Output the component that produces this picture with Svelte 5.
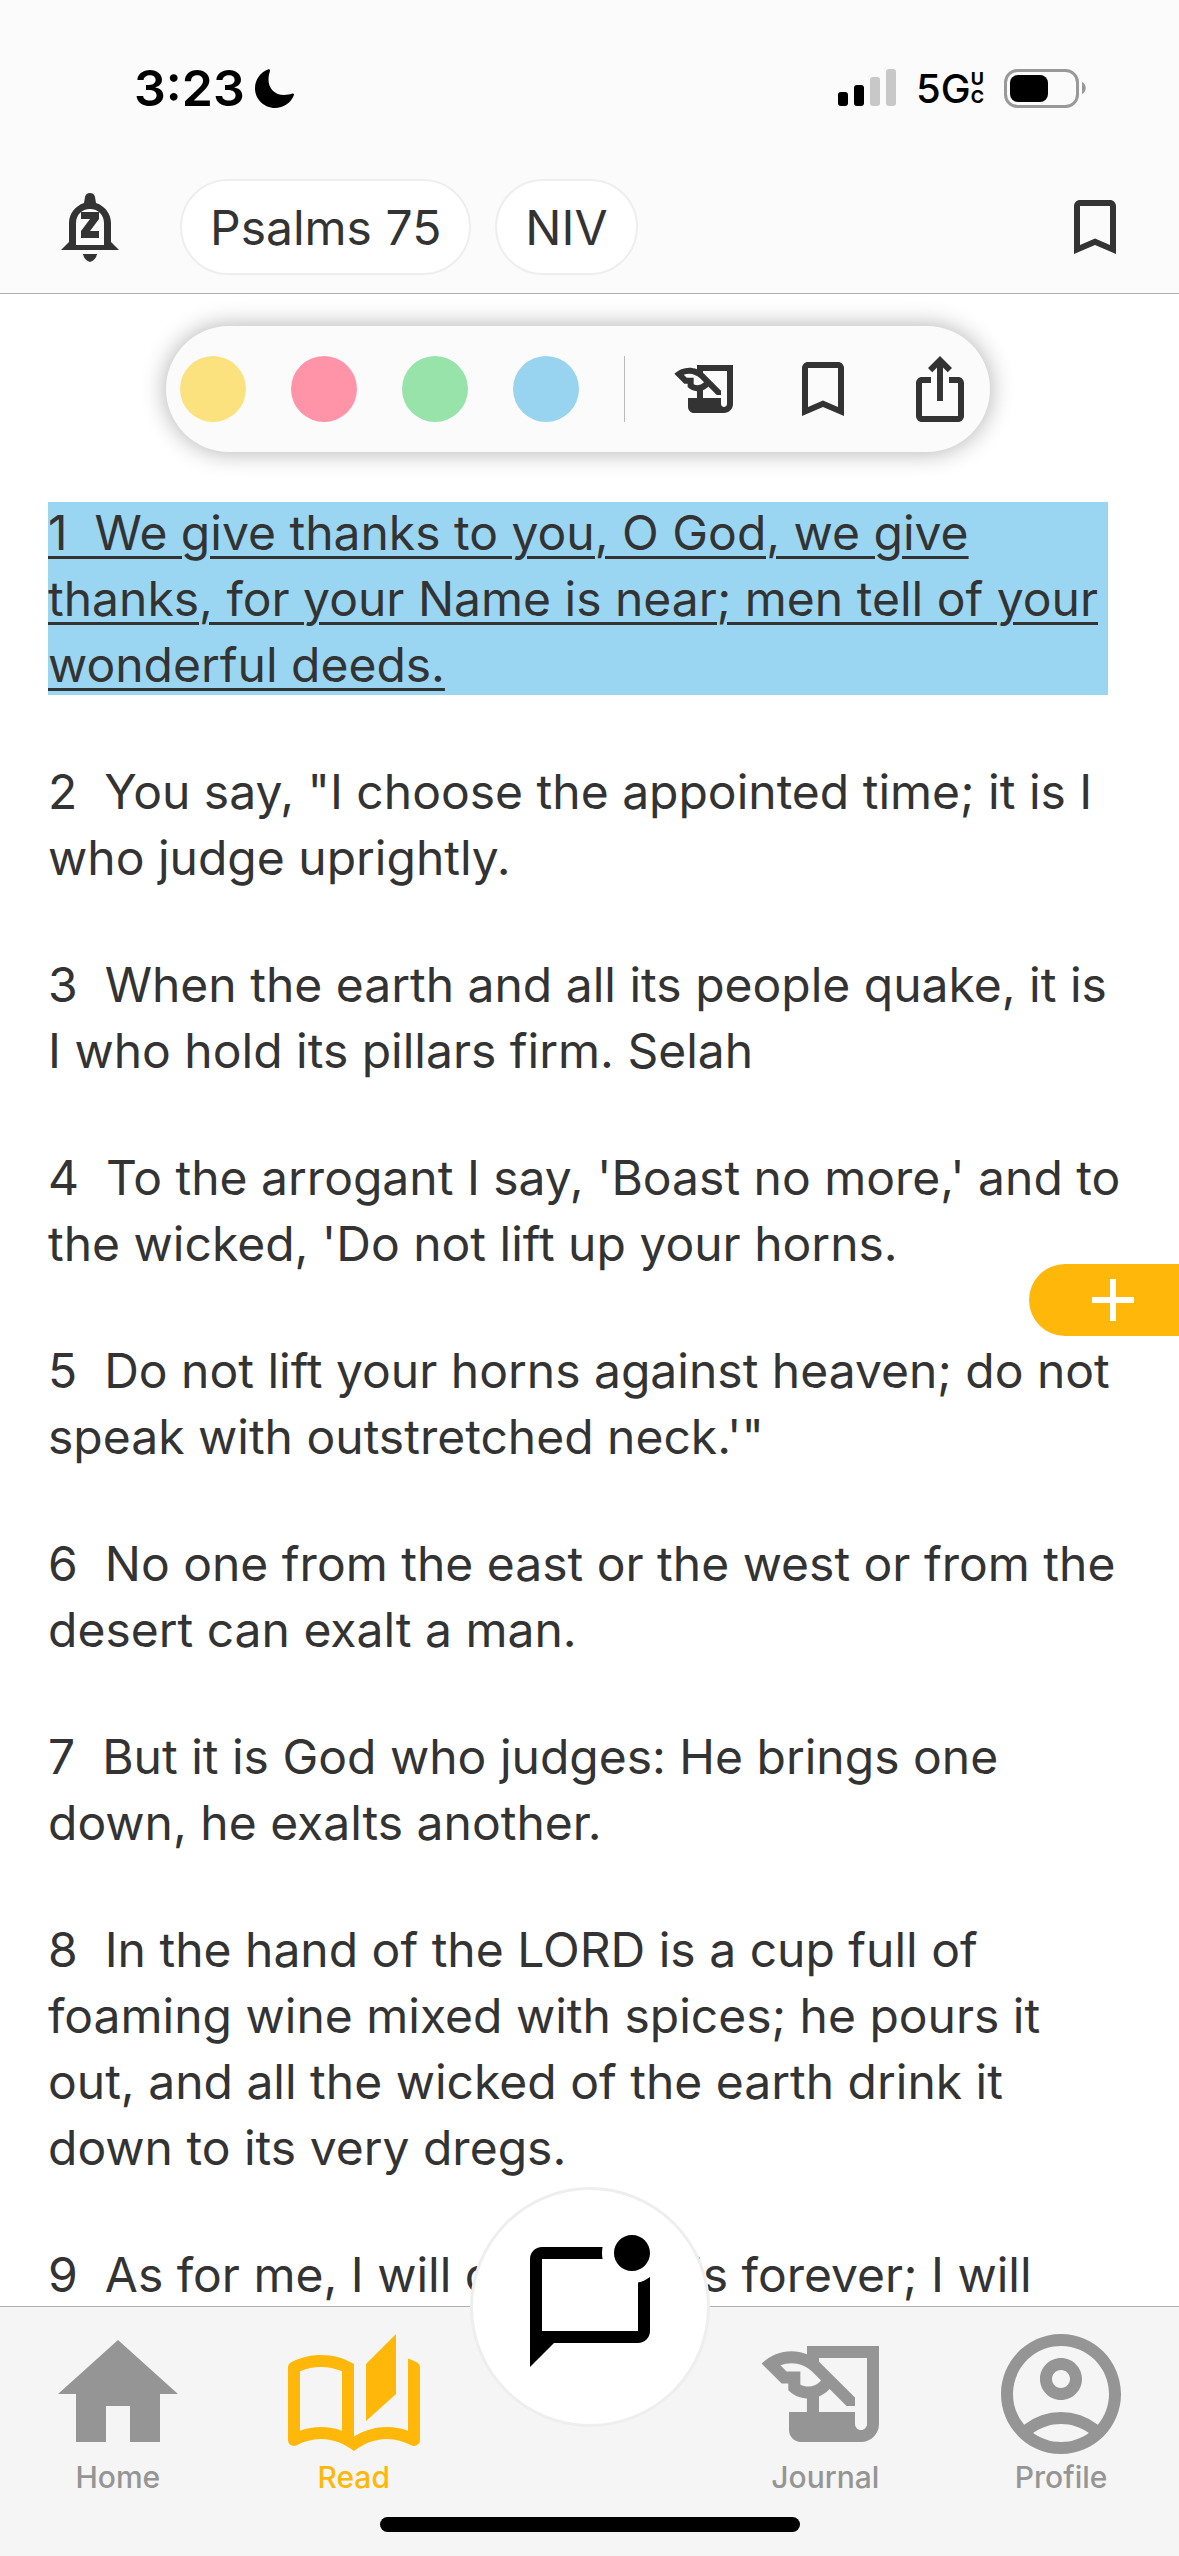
<script>
  const paths = {
    bookmark: 'M17 3H7c-1.1 0-2 .9-2 2v16l7-3 7 3V5c0-1.1-.9-2-2-2zm0 15-5-2.180L7 18V5h10v13z',
    journal: 'M9 4v1.380c-.83-.33-1.720-.5-2.610-.5-1.790 0-3.580.68-4.950 2.050l3.330 3.330h1.110v1.110c.86.86 1.980 1.310 3.110 1.360V15H6v3c0 1.100.9 2 2 2h10c1.660 0 3-1.340 3-3V4H9zm-1.110 6.410V8.260H5.610L4.570 7.220a5.070 5.070 0 0 1 1.820-.34c1.340 0 2.590.52 3.540 1.460l1.410 1.410-.2.2a2.700 2.700 0 0 1-1.920.8c-.47 0-.93-.12-1.330-.34zM19 17c0 .55-.45 1-1 1s-1-.45-1-1v-2h-6v-2.590c.57-.23 1.100-.57 1.560-1.030l.2-.2L15.590 14H17v-1.410l-6-5.970V6h8v11z',
    share: 'M16 5l-1.420 1.420-1.590-1.590V16h-1.980V4.830L9.420 6.420 8 5l4-4 4 4zm4 5v11c0 1.100-.9 2-2 2H6c-1.110 0-2-.9-2-2V10c0-1.110.89-2 2-2h3v2H6v11h12V10h-3V8h3c1.100 0 2 .89 2 2z',
    home: 'M10 20v-6h4v6h5v-8h3L12 3 2 12h3v8z',
    read: 'M22.470 5.200c-.47-.24-.96-.44-1.470-.61v12.030c-1.140-.41-2.310-.62-3.500-.62-1.900 0-3.780.54-5.500 1.580V5.480C10.380 4.550 8.510 4 6.500 4c-1.790 0-3.480.44-4.970 1.200-.33.16-.53.51-.53.88v12.080c0 .58.47.99 1 .99.16 0 .32-.04.48-.12C3.690 18.400 5.050 18 6.500 18c2.070 0 3.980.82 5.500 2 1.520-1.180 3.430-2 5.500-2 1.450 0 2.810.4 4.020 1.040.16.08.32.12.48.12.52 0 1-.41 1-.99V6.080c0-.37-.2-.72-.53-.88zM10 16.620C8.860 16.210 7.690 16 6.500 16c-1.190 0-2.360.21-3.500.62V6.710C4.110 6.240 5.280 6 6.500 6c1.200 0 2.390.25 3.500.72v9.900zM19 .5l-5 5V15l5-4.500V.5z',
    profile: 'M12 2C6.480 2 2 6.480 2 12s4.480 10 10 10 10-4.480 10-10S17.520 2 12 2zM7.350 18.500C8.660 17.560 10.260 17 12 17s3.340.56 4.650 1.500C15.340 19.440 13.740 20 12 20s-3.340-.56-4.650-1.500zm10.790-1.380a9.947 9.947 0 0 0-12.280 0A7.957 7.957 0 0 1 4 12c0-4.420 3.580-8 8-8s8 3.580 8 8c0 1.950-.7 3.730-1.860 5.120zM12 6c-1.930 0-3.500 1.570-3.500 3.500S10.070 13 12 13s3.500-1.570 3.500-3.500S13.930 6 12 6zm0 5c-.83 0-1.500-.67-1.500-1.500S11.170 8 12 8s1.500.67 1.500 1.500S12.830 11 12 11z',
    chat: 'M22 6.980V16c0 1.100-.9 2-2 2H6l-4 4V4c0-1.100.9-2 2-2h10.100c-.06.32-.1.66-.1 1s.04.68.1 1H4v12h16V7.900c.74-.15 1.420-.48 2-.92zM16 3c0 1.660 1.340 3 3 3s3-1.340 3-3-1.340-3-3-3-3 1.340-3 3z'
  };

  const colours = ['yellow', 'pink', 'green', 'blue'];

  const verses = [
    'We give thanks to you, O God, we give thanks, for your Name is near; men tell of your wonderful deeds.',
    'You say, "I choose the appointed time; it is I who judge uprightly.',
    'When the earth and all its people quake, it is I who hold its pillars firm. Selah',
    "To the arrogant I say, 'Boast no more,' and to the wicked, 'Do not lift up your horns.",
    "Do not lift your horns against heaven; do not speak with outstretched neck.'\"",
    'No one from the east or the west or from the desert can exalt a man.',
    'But it is God who judges: He brings one down, he exalts another.',
    'In the hand of the LORD is a cup full of foaming wine mixed with spices; he pours it out, and all the wicked of the earth drink it down to its very dregs.',
    'As for me, I will declare this forever; I will'
  ];
  let selected = $state(0);
</script>

{#snippet icon(name, box = '0 0 24 24')}
  <svg class="icon" viewBox={box} aria-hidden="true"><path fill-rule="evenodd" d={paths[name]} /></svg>
{/snippet}

<div class="screen">
  <header>
    <div class="status">
      <div class="clock">
        <span>3:23</span>
        <svg class="moon" viewBox="0 0 39 39" aria-hidden="true"><path d="M13 .5C5 3.500 0 11 0 19.500 0 30 9 39 20 39c8 0 16-5 19-13 .4-1-.4-1.800-1.500-1.400-3 1.100-5.500 1.400-8.500 1.400C20 26 13.500 20 13.500 10.500c0-3 .5-5.500 1.500-8.500.3-1.200-.8-2-2-1.500z" /></svg>
      </div>
      <div class="signals">
        <svg class="bars" viewBox="0 0 58 38" aria-hidden="true">
          <rect x="0" y="23" width="10" height="14" rx="3" /><rect x="16" y="16" width="10" height="21" rx="3" />
          <rect class="dim" x="32" y="8" width="10" height="29" rx="3" /><rect class="dim" x="48" y="0" width="10" height="37" rx="3" />
        </svg>
        <span class="network">5G<span class="uc"><span>U</span><span>C</span></span></span>
        <svg class="battery" viewBox="0 0 82 39" aria-hidden="true">
          <rect class="shell" x="1.500" y="1.500" width="72" height="36" rx="12" />
          <rect x="6" y="6" width="38" height="27" rx="8" />
          <path class="nub" d="M78 13c5 2 5 10 0 12z" />
        </svg>
      </div>
    </div>
    <div class="bar">
      <button class="plain" aria-label="Snooze reminders">
        <svg class="icon" viewBox="0 0 72 72" aria-hidden="true">
          <path fill-rule="evenodd" d="M31 6q1-4 5-4t5 4l1 6c9 3 15 11 15 20v19l8 8H7l8-8V32c0-9 6-17 15-20zM36 18c-8 0-14 6-14 14v22h28V32c0-8-6-14-14-14z" />
          <path d="M27 21h18v7l-9 12h9v7H27v-7l9-12h-9zM29 63h14q-1 6-7 8-6-2-7-8z" />
        </svg>
      </button>
      <button class="pill">Psalms 75</button>
      <button class="pill">NIV</button>
      <button class="plain end" aria-label="Bookmarks">{@render icon('bookmark')}</button>
    </div>
  </header>

  <main>
    <div class="tools" role="toolbar" aria-label="Verse actions">
      {#each colours as colour}
        <button class="dot {colour}" aria-label="Highlight {colour}"></button>
      {/each}
      <span class="rule"></span>
      <button class="plain" aria-label="Journal">{@render icon('journal')}</button>
      <button class="plain" aria-label="Bookmark verse">{@render icon('bookmark')}</button>
      <button class="plain" aria-label="Share">{@render icon('share')}</button>
    </div>
    <article>
      {#each verses as verse, i}
        <p class:selected={i === selected}>{i + 1}&nbsp; {verse}</p>
      {/each}
    </article>
    <button class="add" aria-label="Add">
      <svg viewBox="0 0 42 42" aria-hidden="true"><path d="M18 0h6v18h18v6H24v18h-6V24H0v-6h18z" /></svg>
    </button>
  </main>

  <footer>
    <nav>
      <a href="#home">{@render icon('home')}<span>Home</span></a>
      <a href="#read" class="active" aria-current="page">{@render icon('read', '0 -1.500 24 24')}<span>Read</span></a>
      <button class="chat" aria-label="Messages">{@render icon('chat')}</button>
      <a href="#journal">{@render icon('journal')}<span>Journal</span></a>
      <a href="#profile">{@render icon('profile')}<span>Profile</span></a>
    </nav>
    <div class="grip"></div>
  </footer>
</div>

<style>
  :global(body) { background: #fff; }
  * { box-sizing: border-box; }
  .screen {
    height: 100vh;
    display: flex;
    flex-direction: column;
    overflow: hidden;
    font-family: Inter, "Liberation Sans", sans-serif;
    color: #333;
  }
  button { border: 0; padding: 0; font: inherit; color: inherit; background: none; cursor: pointer; }
  svg { display: block; flex: none; fill: currentColor; }
  header { flex: none; background: #fbfbfb; border-bottom: 1px solid #b0b0b0; }
  .status {
    height: 176px;
    display: flex;
    justify-content: space-between;
    align-items: center;
    padding: 0 93px 0 134px;
    color: #000;
  }
  .clock, .signals { display: flex; align-items: center; }
  .clock { gap: 10px; font-size: 50px; font-weight: 600; }
  .moon { width: 39px; height: 39px; }
  .bars { width: 58px; height: 38px; }
  .dim { fill: #c8c8c8; }
  .network { display: flex; align-items: center; margin: 0 20px; font-size: 40px; font-weight: 500; }
  .uc { display: flex; flex-direction: column; font-size: 18px; line-height: 18px; font-weight: 700; }
  .battery { width: 82px; height: 39px; }
  .shell { fill: none; stroke: #999; stroke-width: 3; }
  .nub { fill: #999; }
  .bar { display: flex; align-items: center; gap: 24px; padding: 3px 48px 18px 54px; }
  .plain, .plain .icon { width: 72px; height: 72px; }
  .bar .plain:first-child { margin-right: 30px; }
  .bar .end { margin-left: auto; }
  .pill {
    height: 96px;
    padding: 0 28px;
    border: 2px solid #eee;
    border-radius: 48px;
    background: #fff;
    font-size: 48px;
  }
  main { position: relative; flex: 1; min-height: 0; overflow: hidden; padding: 32px 48px 0; }
  .tools {
    width: max-content;
    height: 126px;
    margin: 0 0 48px 118px;
    padding: 0 14px;
    display: flex;
    align-items: center;
    gap: 45px;
    border-radius: 63px;
    background: #fbfbfb;
    box-shadow: 0 0 24px rgba(0, 0, 0, 0.320);
  }
  .dot { width: 66px; height: 66px; border-radius: 50%; }
  .yellow { background: #fce27e; }
  .pink { background: #ff94a8; }
  .green { background: #98e3aa; }
  .blue { background: #98d4f0; }
  .rule { width: 1px; height: 66px; background: #bbb; }
  p { margin: 0 0 61px; font-size: 48px; line-height: 66px; }
  .selected {
    margin-right: 23px;
    background: linear-gradient(#9ad6f2, #9ad6f2) 0 2px / 100% calc(100% - 5px) no-repeat;
    text-decoration: underline;
    text-decoration-thickness: 3px;
    text-underline-offset: 6px;
  }
  .add {
    position: absolute;
    right: 0;
    top: 970px;
    width: 150px;
    height: 72px;
    padding-left: 63px;
    border-radius: 36px 0 0 36px;
    background: #ffb80a;
    color: #fff;
  }
  .add svg { width: 42px; height: 42px; }
  footer { flex: none; background: #f5f5f5; border-top: 1px solid #b0b0b0; }
  nav { position: relative; display: grid; grid-template-columns: repeat(5, minmax(0, 1fr)); justify-items: center; padding-top: 15px; }
  a { display: flex; flex-direction: column; align-items: center; color: #959595; text-decoration: none; font-size: 30px; line-height: 22px; font-weight: 500; }
  a .icon { width: 144px; height: 144px; }
  .active { color: #ffb80a; }
  .chat {
    width: 240px;
    height: 240px;
    margin: -135px 0 0;
    display: flex;
    align-items: center;
    justify-content: center;
    border: 3px solid #eee;
    border-radius: 50%;
    background: #fff;
    color: #000;
  }
  nav { height: 181px; }
  .chat .icon { width: 144px; height: 144px; }
  .grip { width: 420px; height: 15px; margin: 29px auto 24px; border-radius: 8px; background: #000; }
</style>
